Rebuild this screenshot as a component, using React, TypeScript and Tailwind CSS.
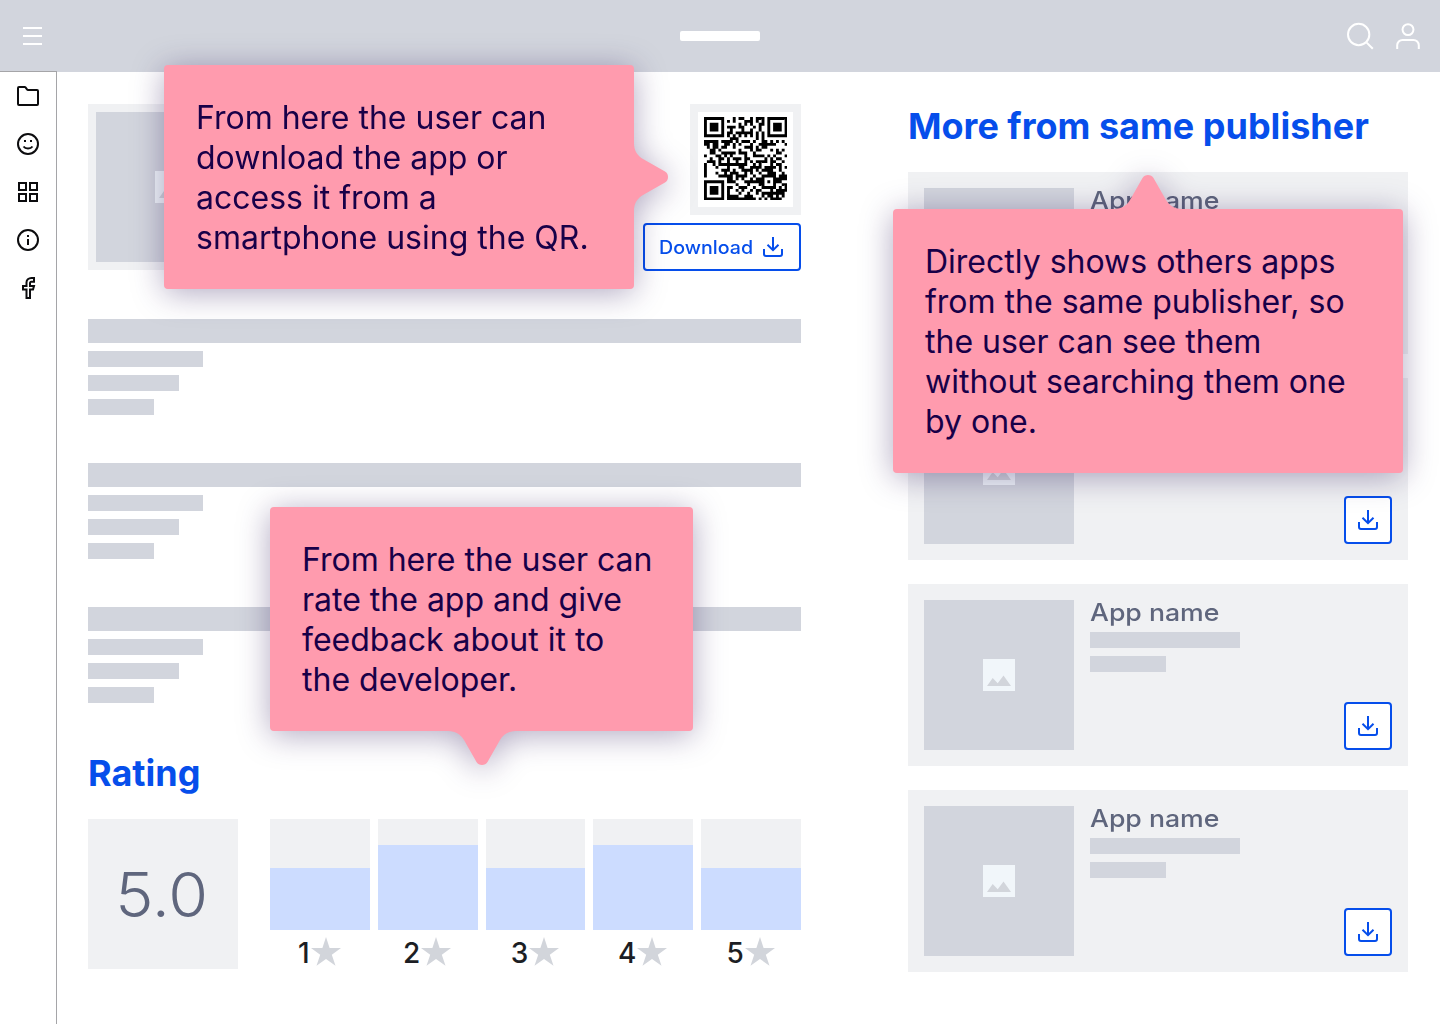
import type { ReactNode } from "react";

/* ---------- QR code (version 3, level L, mask 2) ---------- */

const QR_SIZE = 29;
const QR_DATA = 55;
const QR_EC = 15;

function gfMul(a: number, b: number) {
  let r = 0;
  for (let i = 7; i >= 0; i--) {
    r = (r << 1) ^ ((r >>> 7) * 0x11d);
    r ^= ((b >>> i) & 1) * a;
  }
  return r;
}

function errorCorrection(data: number[]) {
  const gen = new Array<number>(QR_EC).fill(0);
  gen[QR_EC - 1] = 1;
  let root = 1;
  for (let i = 0; i < QR_EC; i++) {
    for (let j = 0; j < QR_EC; j++) {
      gen[j] = gfMul(gen[j], root);
      if (j + 1 < QR_EC) gen[j] ^= gen[j + 1];
    }
    root = gfMul(root, 2);
  }
  const rem = new Array<number>(QR_EC).fill(0);
  for (const b of data) {
    const f = b ^ (rem.shift() as number);
    rem.push(0);
    gen.forEach((g, i) => (rem[i] ^= gfMul(g, f)));
  }
  return rem;
}

function encodeQr(text: string) {
  const bits: number[] = [];
  const push = (v: number, n: number) => {
    for (let i = n - 1; i >= 0; i--) bits.push((v >>> i) & 1);
  };
  push(4, 4);
  push(text.length, 8);
  for (const c of text) push(c.charCodeAt(0), 8);
  push(0, 4);
  while (bits.length % 8) bits.push(0);
  const data: number[] = [];
  for (let i = 0; i < bits.length; i += 8) data.push(parseInt(bits.slice(i, i + 8).join(""), 2));
  for (let pad = 0xec; data.length < QR_DATA; pad ^= 0xec ^ 0x11) data.push(pad);
  const all = data.concat(errorCorrection(data));

  const grid: (boolean | null)[][] = Array.from({ length: QR_SIZE }, () => new Array(QR_SIZE).fill(null));
  const last = QR_SIZE - 1;
  for (let i = 0; i < QR_SIZE; i++) {
    grid[6][i] = i % 2 === 0;
    grid[i][6] = i % 2 === 0;
  }
  for (const [cy, cx] of [[3, 3], [3, last - 3], [last - 3, 3]]) {
    for (let dy = -4; dy <= 4; dy++)
      for (let dx = -4; dx <= 4; dx++) {
        const y = cy + dy;
        const x = cx + dx;
        if (y < 0 || x < 0 || y > last || x > last) continue;
        const d = Math.max(Math.abs(dx), Math.abs(dy));
        grid[y][x] = d !== 2 && d !== 4;
      }
  }
  for (let dy = -2; dy <= 2; dy++)
    for (let dx = -2; dx <= 2; dx++) grid[22 + dy][22 + dx] = Math.max(Math.abs(dx), Math.abs(dy)) !== 1;

  const format = "111110110101010".split("").map((c) => c === "1");
  for (let i = 0; i < 6; i++) grid[8][i] = format[i];
  grid[8][7] = format[6];
  grid[8][8] = format[7];
  grid[7][8] = format[8];
  for (let i = 9; i < 15; i++) grid[14 - i][8] = format[i];
  for (let i = 0; i < 7; i++) grid[last - i][8] = format[i];
  for (let i = 7; i < 15; i++) grid[8][QR_SIZE - 15 + i] = format[i];
  grid[last - 7][8] = true;

  let k = 0;
  for (let right = last; right >= 1; right -= 2) {
    if (right === 6) right = 5;
    for (let v = 0; v < QR_SIZE; v++)
      for (let j = 0; j < 2; j++) {
        const x = right - j;
        const y = ((right + 1) & 2) === 0 ? last - v : v;
        if (grid[y][x] !== null) continue;
        const bit = k < all.length * 8 ? (all[k >>> 3] >>> (7 - (k & 7))) & 1 : 0;
        k++;
        grid[y][x] = (bit === 1) !== (x % 3 === 0);
      }
  }
  return grid;
}

function QrCode({ value }: { value: string }) {
  const d = encodeQr(value)
    .map((row, y) => row.map((on, x) => (on ? `M${x} ${y}h1v1h-1z` : "")).join(""))
    .join("");
  return (
    <svg viewBox="0 0 29 29" className="mt-[4.700px] ml-[5.500px] size-[83.500px]">
      <path d={d} fill="#000" />
    </svg>
  );
}

/* ---------- Icons ---------- */

function LineIcon({ children, className = "size-6", width = 2 }: { children: ReactNode; className?: string; width?: number }) {
  return (
    <svg viewBox="0 0 24 24" fill="none" stroke="currentColor" strokeWidth={width} className={className}>
      {children}
    </svg>
  );
}

const DownloadIcon = () => (
  <LineIcon>
    <path d="M12 2v13.500M6.500 9.800l5.500 5.400 5.500-5.400M3 14v5a2 2 0 0 0 2 2h14a2 2 0 0 0 2-2v-5" />
  </LineIcon>
);

const ImageIcon = () => (
  <svg viewBox="0 0 32 32" className="-mt-px size-8">
    <path d="M0 0h32v32H0z" fill="#f1f6fa" />
    <path d="M4 27l5.700-8 5 5.300L20.500 16.500 28 27z" fill="#d2d5db" />
  </svg>
);

const Star = () => (
  <svg viewBox="0 0 30 29" className="h-[29px] w-[30px]">
    <path d="M15 0l3.600 11H30l-9.200 6.800L24.500 28.700 15 22 5.500 28.700 9.200 17.800 0 11h11.400z" fill="#d2d5db" />
  </svg>
);

/* ---------- Placeholders ---------- */

function Thumbnail() {
  return (
    <div className="flex size-[150px] shrink-0 items-center justify-center bg-[#d2d5dd]">
      <ImageIcon />
    </div>
  );
}

function TextBlock() {
  return (
    <div className="flex h-24 flex-col gap-2">
      <div className="h-6 bg-[#d2d5dd]" />
      <div className="h-4 w-[115px] bg-[#d2d5dd]" />
      <div className="h-4 w-[91px] bg-[#d2d5dd]" />
      <div className="h-4 w-[66px] bg-[#d2d5dd]" />
    </div>
  );
}

function AppCard() {
  return (
    <div className="flex h-[182px] gap-4 bg-[#f0f1f3] p-4">
      <Thumbnail />
      <div className="flex flex-1 flex-col">
        <h3 className="h-6 w-fit origin-left scale-x-[1.11] text-[24px] leading-[25px] font-[550] whitespace-nowrap text-[#5f667d]">App name</h3>
        <div className="mt-2 h-4 w-[150px] bg-[#d2d5dd]" />
        <div className="mt-2 h-4 w-[76px] bg-[#d2d5dd]" />
      </div>
      <button className="flex size-12 items-center justify-center self-end rounded-[4px] border-2 border-[#064eeb] bg-white text-[#064eeb]">
        <DownloadIcon />
      </button>
    </div>
  );
}

/* ---------- Annotations ---------- */

function Callout({ className, tail, lines }: { className: string; tail: string; lines: string[] }) {
  return (
    <div className={`absolute rounded-[4px] bg-[#ff9bae] px-8 pt-[33px] drop-shadow-[0_4px_16px_rgba(24,0,72,0.34)] ${className}`}>
      <p className="text-[32px] leading-[40px] whitespace-nowrap text-[#180048]">
        {lines.map((line) => (
          <span key={line} className="block">{line}</span>
        ))}
      </p>
      <svg viewBox="0 0 68 34" className={`absolute h-[34px] w-[68px] ${tail}`}>
        <path d="M0 0C8 0 12.500 3.500 16 9L28.500 31C30.500 35 37.500 35 39.500 31L52 9C55.500 3.500 60 0 68 0z" fill="#ff9bae" />
      </svg>
    </div>
  );
}

const ratings = [
  { stars: 1, height: 62 },
  { stars: 2, height: 85 },
  { stars: 3, height: 62 },
  { stars: 4, height: 85 },
  { stars: 5, height: 62 },
];

export default function App() {
  return (
    <div className="relative flex h-[1024px] w-[1440px] flex-col overflow-hidden bg-white font-['Inter',sans-serif]">
      <header className="flex h-[72px] shrink-0 items-center justify-between bg-[#d2d5dd] text-white">
        <div className="flex w-[120px] pl-5">
          <LineIcon width={1.800}>
            <path d="M3 4h19M3 12h19M3 20h19" />
          </LineIcon>
        </div>
        <div className="h-[10px] w-20 rounded-[2px] bg-white" />
        <div className="flex w-[120px] justify-end gap-4 pr-4">
          <LineIcon className="size-8" width={1.500}>
            <circle cx="11" cy="10.900" r="8" />
            <path d="M17 17l4.600 4.600" />
          </LineIcon>
          <LineIcon className="size-8" width={1.500}>
            <circle cx="12" cy="7.200" r="4.100" />
            <path d="M3.900 21.800v-2.800a4 4 0 0 1 4-4h8.200a4 4 0 0 1 4 4v2.800" />
          </LineIcon>
        </div>
      </header>

      <div className="flex flex-1">
        <nav className="-mt-px flex w-[57px] flex-col items-center gap-6 border-t border-r border-[#a5a5a8] bg-white pt-3 text-[#0c0c0e]">
          <LineIcon>
            <path d="M2 20V4a1 1 0 0 1 1-1h5.700a1 1 0 0 1 .8.400l1.700 2.200a1 1 0 0 0 .8.400H21a1 1 0 0 1 1 1v13a1 1 0 0 1-1 1H3a1 1 0 0 1-1-1z" />
          </LineIcon>
          <LineIcon>
            <circle cx="12" cy="12" r="10" />
            <path d="M7.500 14.500s1.500 2 4.500 2 4.500-2 4.500-2M8 9h2M14 9h2" />
          </LineIcon>
          <LineIcon>
            <path d="M3 3h7v7H3zM14 3h7v7h-7zM3 14h7v7H3zM14 14h7v7h-7z" />
          </LineIcon>
          <LineIcon>
            <circle cx="12" cy="12" r="10" />
            <path d="M11 12h1v5M12 7v2" />
          </LineIcon>
          <LineIcon>
            <path d="M18 2h-2.500C12.500 2 10.500 4 10.500 6.500V10H7v3.500h3.500V22H14v-8.500h3L18 10h-4V7a1.200 1.200 0 0 1 1.200-1.200H18z" />
          </LineIcon>
        </nav>

        <main className="flex flex-1 justify-between pt-8 pr-8 pl-[31px]">
          <section className="w-[713px]">
            <div className="flex h-[167px] justify-between">
              <div className="size-[166px] bg-[#f0f1f3] p-2">
                <Thumbnail />
              </div>
              <div className="flex flex-col items-end gap-2">
                <div className="size-[111px] bg-[#f0f1f3] p-2">
                  <div className="flex size-[95px] items-start bg-white">
                    <QrCode value="https://www.apklis.cu/application/com.duolingo" />
                  </div>
                </div>
                <button className="flex h-12 w-[158px] items-center justify-between rounded-[4px] border-2 border-[#064eeb] bg-white pr-[14px] pl-[14px] text-[#064eeb]">
                  <span className="origin-left scale-x-[1.090] text-[18px] font-[450]">Download</span>
                  <DownloadIcon />
                </button>
              </div>
            </div>

            <div className="mt-12 flex flex-col gap-12">
              <TextBlock />
              <TextBlock />
              <TextBlock />
            </div>

            <h2 className="mt-12 text-[36px] leading-[44px] font-bold text-[#064eeb]">Rating</h2>
            <div className="mt-6 flex gap-8">
              <div className="flex size-[150px] items-center justify-center bg-[#f0f1f3]">
                <span className="-ml-[2px] scale-x-[1.040] text-[62px] font-[350] text-[#5f667d]">5.0</span>
              </div>
              <div className="flex flex-1 gap-2">
                {ratings.map(({ stars, height }) => (
                  <div key={stars} className="flex-1">
                    <div className="flex h-[111px] items-end bg-[#f0f1f3]">
                      <div className="w-full bg-[#ccdcff]" style={{ height }} />
                    </div>
                    <div className="mt-[6px] -ml-px flex h-[30px] items-center justify-center gap-px text-[28px] font-medium text-[#1c1e24]">
                      <span className="mt-[3px]">{stars}</span>
                      <Star />
                    </div>
                  </div>
                ))}
              </div>
            </div>
          </section>

          <section className="w-[500px]">
            <h2 className="text-[36px] leading-[44px] font-bold whitespace-nowrap text-[#064eeb]">More from same publisher</h2>
            <div className="mt-6 flex flex-col gap-6">
              <AppCard />
              <AppCard />
              <AppCard />
              <AppCard />
            </div>
          </section>
        </main>
      </div>

      <Callout
        className="top-[65px] left-[164px] h-[224px] w-[470px]"
        tail="top-[95px] -right-[51px] -rotate-90"
        lines={["From here the user can", "download the app or", "access it from a", "smartphone using the QR."]}
      />
      <Callout
        className="top-[209px] left-[893px] h-[264px] w-[510px]"
        tail="-top-[34px] left-[221px] rotate-180"
        lines={["Directly shows others apps", "from the same publisher, so", "the user can see them", "without searching them one", "by one."]}
      />
      <Callout
        className="top-[507px] left-[270px] h-[224px] w-[423px]"
        tail="-bottom-[34px] left-[177.500px]"
        lines={["From here the user can", "rate the app and give", "feedback about it to", "the developer."]}
      />
    </div>
  );
}
